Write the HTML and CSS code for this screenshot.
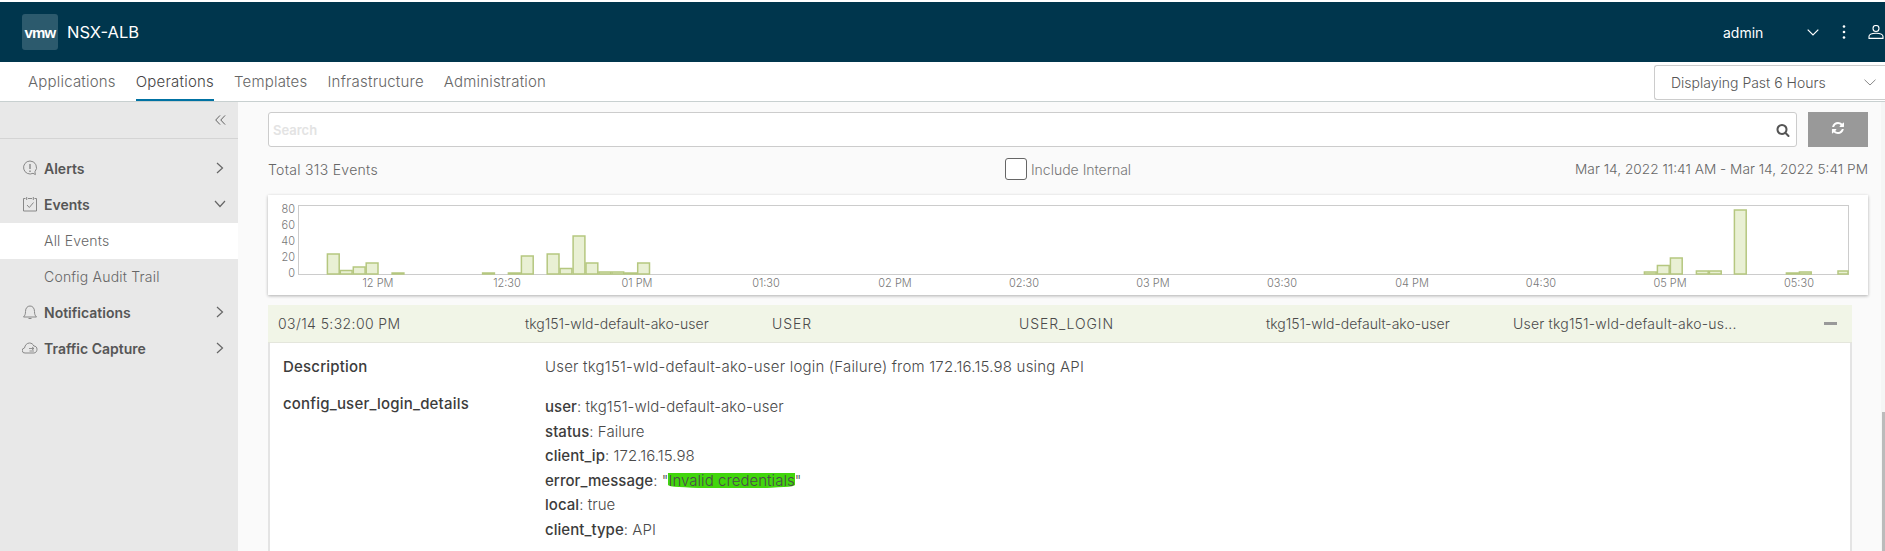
FILE: index.html
```html
<!DOCTYPE html>
<html lang="en">
<head>
<meta charset="utf-8">
<title>NSX-ALB</title>
<link rel="stylesheet" href="styles.css">
</head>
<body>
<header class="topbar">
  <div class="brand">
    <span class="logo">vmw</span>
    <span class="product">NSX-ALB</span>
  </div>
  <div class="account">
    <span class="username">admin</span>
    <svg class="account-chevron" viewBox="0 0 12 7"><path d="M.7.7 6 6 11.300.7" fill="none" stroke="#fff" stroke-width="1.200"/></svg>
    <svg class="account-dots" viewBox="0 0 4 14"><circle cx="2" cy="1.500" r="1.300"/><circle cx="2" cy="7" r="1.300"/><circle cx="2" cy="12.500" r="1.300"/></svg>
    <svg class="account-user" viewBox="0 0 16 14"><circle cx="8" cy="3.500" r="3" fill="none" stroke="#fff" stroke-width="1.100"/><path d="M1 13.400v-1.900c0-2 3-3.300 7-3.300s7 1.300 7 3.300v1.900z" fill="none" stroke="#fff" stroke-width="1.100"/></svg>
  </div>
</header>

<nav class="tabs">
  <a class="tab">Applications</a>
  <a class="tab tab-active">Operations</a>
  <a class="tab">Templates</a>
  <a class="tab">Infrastructure</a>
  <a class="tab">Administration</a>
  <div class="range">
    <span>Displaying Past 6 Hours</span>
    <svg class="range-chevron" viewBox="0 0 12 7"><path d="M.5.7 6 6 11.500.7" fill="none" stroke="#8a8a8a" stroke-width="1"/></svg>
  </div>
</nav>

<div class="main">
  <aside class="sidebar">
    <div class="collapse">
      <svg class="collapse-icon" viewBox="0 0 12 12"><path d="M5.500 1 .8 6l4.700 5M11 1 6.300 6l4.700 5" fill="none" stroke="#555" stroke-width="1"/></svg>
    </div>
    <ul class="menu">
      <li class="menu-item">
        <svg class="menu-icon" viewBox="0 0 16 16"><path d="M8 1a6.500 6.500 0 1 0 3 12.300l2.400 1.300-.5-2.800A6.500 6.500 0 0 0 8 1z" fill="none" stroke="#888" stroke-width="1"/><path d="M8 4v5M8 10.500v1.500" stroke="#888" stroke-width="1.400"/></svg>
        <span class="menu-label">Alerts</span>
        <svg class="menu-chevron" viewBox="0 0 8 12"><path d="M1 1l5.500 5L1 11" fill="none" stroke="#666" stroke-width="1.200"/></svg>
      </li>
      <li class="menu-item">
        <svg class="menu-icon" viewBox="0 0 16 16"><path d="M3.500 2.500H1.500v12.500h13V2.500h-2M6 2.500h4" fill="none" stroke="#888" stroke-width="1"/><path d="M4.700 1v3M11.300 1v3" stroke="#888" stroke-width="1"/><path d="M5 9l2.300 2.500L11.500 6.500" fill="none" stroke="#888" stroke-width="1"/></svg>
        <span class="menu-label">Events</span>
        <svg class="menu-chevron-down" viewBox="0 0 12 8"><path d="M1 1l5 5.500L11 1" fill="none" stroke="#666" stroke-width="1.200"/></svg>
      </li>
      <li class="submenu-item submenu-active">All Events</li>
      <li class="submenu-item">Config Audit Trail</li>
      <li class="menu-item">
        <svg class="menu-icon" viewBox="0 0 16 16"><path d="M1.500 13c1.500-1.500 2-3 2-5.500C3.500 4 5.500 2 8 2s4.500 2 4.500 5.500c0 2.500.5 4 2 5.500zM6.500 14.500h3" fill="none" stroke="#888" stroke-width="1"/></svg>
        <span class="menu-label">Notifications</span>
        <svg class="menu-chevron" viewBox="0 0 8 12"><path d="M1 1l5.500 5L1 11" fill="none" stroke="#666" stroke-width="1.200"/></svg>
      </li>
      <li class="menu-item">
        <svg class="menu-icon" viewBox="0 0 16 16"><path d="M4 13H3a2.500 2.500 0 0 1-.5-5C3 5 5 3 7.500 3c2 0 3.700 1.300 4.300 3 1.900 0 3.200 1.300 3.200 3.300 0 2-1.300 3.700-3 3.700z" fill="none" stroke="#888" stroke-width="1"/><path d="M7 8.500h5M10 7l2 1.500-2 1.500M12 11H7.500" fill="none" stroke="#888" stroke-width=".9"/></svg>
        <span class="menu-label">Traffic Capture</span>
        <svg class="menu-chevron" viewBox="0 0 8 12"><path d="M1 1l5.500 5L1 11" fill="none" stroke="#666" stroke-width="1.200"/></svg>
      </li>
    </ul>
  </aside>

  <section class="content">
    <div class="search-row">
      <div class="search">
        <span class="search-placeholder">Search</span>
        <svg class="search-icon" viewBox="0 0 1792 1792"><path d="M1216 832q0-185-131.500-316.500t-316.500-131.500-316.500 131.500-131.500 316.500 131.500 316.500 316.500 131.500 316.500-131.500 131.500-316.500zm512 832q0 52-38 90t-90 38q-54 0-90-38l-343-342q-179 124-399 124-143 0-273.500-55.500t-225-150-150-225-55.500-273.500 55.500-273.500 150-225 225-150 273.500-55.500 273.500 55.500 225 150 150 225 55.500 273.500q0 220-124 399l343 343q37 37 37 90z"/></svg>
      </div>
      <button class="refresh" type="button" aria-label="Refresh">
        <svg class="refresh-icon" viewBox="0 0 1792 1792"><path d="M1639 1056q0 5-1 7-64 268-268 434.500t-478 166.500q-146 0-282.500-55t-252.500-157l-129 129q-19 19-45 19t-45-19-19-45v-448q0-26 19-45t45-19h448q26 0 45 19t19 45-19 45l-137 137q71 66 161 102t187 36q134 0 250-65t186-179q11-17 53-117 8-23 30-23h192q13 0 22.500 9.500t9.500 22.500zm25-800v448q0 26-19 45t-45 19h-448q-26 0-45-19t-19-45 19-45l138-138q-148-137-349-137-134 0-250 65t-186 179q-11 17-53 117-8 23-30 23h-199q-13 0-22.500-9.500t-9.500-22.500v-7q65-268 270-434.500t480-166.500q146 0 284 55.500t245 156.500l130-129q19-19 45-19t45 19 19 45z"/></svg>
      </button>
    </div>

    <div class="stats">
      <span class="total">Total 313 Events</span>
      <label class="include"><span class="checkbox"></span><span>Include Internal</span></label>
      <span class="dates">Mar 14, 2022 11:41 AM - Mar 14, 2022 5:41 PM</span>
    </div>

    <div class="chart-card">
      <svg class="chart" viewBox="268 195 1600 100">
        <rect class="plot" x="298.500" y="205.500" width="1550" height="69"/>
        <g class="y-labels">
          <text x="295" y="213">80</text><text x="295" y="229">60</text><text x="295" y="245">40</text><text x="295" y="261">20</text><text x="295" y="277">0</text>
        </g>
        <g class="x-labels">
          <text x="378" y="287">12 PM</text><text x="507" y="287">12:30</text><text x="637" y="287">01 PM</text><text x="766" y="287">01:30</text><text x="895" y="287">02 PM</text><text x="1024" y="287">02:30</text><text x="1153" y="287">03 PM</text><text x="1282" y="287">03:30</text><text x="1412" y="287">04 PM</text><text x="1541" y="287">04:30</text><text x="1670" y="287">05 PM</text><text x="1799" y="287">05:30</text>
        </g>
        <g class="bars">
          <rect x="327.400" y="254" width="11.800" height="20"/>
          <rect x="340.300" y="270.500" width="11.800" height="3.500"/>
          <rect x="353.300" y="267" width="11.800" height="7"/>
          <rect x="366.200" y="263" width="11.800" height="11"/>
          <rect x="392.100" y="273" width="11.800" height="1"/>
          <rect x="482.600" y="273" width="11.800" height="1"/>
          <rect x="508.400" y="273" width="11.800" height="1"/>
          <rect x="521.400" y="256" width="11.800" height="18"/>
          <rect x="547.200" y="254" width="11.800" height="20"/>
          <rect x="560.100" y="268.500" width="11.800" height="5.500"/>
          <rect x="573.100" y="236" width="11.800" height="38"/>
          <rect x="586" y="263" width="11.800" height="11"/>
          <rect x="598.900" y="272" width="11.800" height="2"/>
          <rect x="611.900" y="272" width="11.800" height="2"/>
          <rect x="624.800" y="273" width="11.800" height="1"/>
          <rect x="637.700" y="263" width="11.800" height="11"/>
          <rect x="1644.400" y="272" width="11.800" height="2"/>
          <rect x="1657.400" y="265.500" width="11.800" height="8.500"/>
          <rect x="1670.400" y="258" width="11.800" height="16"/>
          <rect x="1696.400" y="271" width="11.800" height="3"/>
          <rect x="1709.400" y="271" width="11.800" height="3"/>
          <rect x="1734.400" y="210" width="11.800" height="64"/>
          <rect x="1786.400" y="273" width="11.800" height="1"/>
          <rect x="1799.400" y="272" width="11.800" height="2"/>
          <rect x="1838" y="271" width="10" height="3"/>
        </g>
      </svg>
    </div>

    <article class="event">
      <div class="event-row">
        <span class="event-time">03/14 5:32:00 PM</span>
        <span>tkg151-wld-default-ako-user</span>
        <span class="event-caps">USER</span>
        <span class="event-caps">USER_LOGIN</span>
        <span>tkg151-wld-default-ako-user</span>
        <span class="event-summary">User tkg151-wld-default-ako-us...</span>
        <span class="event-toggle"></span>
      </div>
      <div class="event-detail">
        <div class="detail-key">Description</div>
        <div class="detail-value">User tkg151-wld-default-ako-user login (Failure) from 172.16.15.98 using API</div>
        <div class="detail-key">config_user_login_details</div>
        <div class="detail-list">
          <div><b>user</b>: tkg151-wld-default-ako-user</div>
          <div><b>status</b>: Failure</div>
          <div><b>client_ip</b>: 172.16.15.98</div>
          <div><b>error_message</b>: "<span class="marker">Invalid credentials</span>"</div>
          <div><b>local</b>: true</div>
          <div><b>client_type</b>: API</div>
        </div>
      </div>
    </article>

    <div class="scroll-track"><div class="scroll-thumb"></div></div>
  </section>
</div>
</body>
</html>
```
FILE: styles.css
```css
* { box-sizing: border-box; }
html, body { margin: 0; height: 551px; overflow: hidden; }
body {
  display: flex;
  flex-direction: column;
  font-family: Inter, "Liberation Sans", sans-serif;
  font-size: 14px;
  font-weight: 300;
  color: #565656;
  background: #fff;
  padding-top: 2px;
}

.topbar {
  flex: 0 0 60px;
  display: flex;
  align-items: center;
  justify-content: space-between;
  background: #00364d;
  color: #fff;
  overflow: hidden;
}
.brand { display: flex; align-items: center; padding-left: 22px; }
.logo {
  width: 36px;
  height: 36px;
  display: flex;
  align-items: center;
  justify-content: center;
  background: #2c5a6d;
  border-radius: 3px;
  font-family: "Liberation Sans", sans-serif;
  font-size: 15px;
  font-weight: 700;
  letter-spacing: -0.8px;
}
.product { margin-left: 9px; font-size: 16.5px; font-weight: 400; }
.account { display: flex; align-items: center; width: 162px; flex: 0 0 162px; }
.username { width: 84px; font-size: 14px; font-weight: 400; }
.account-chevron { width: 12px; height: 7px; }
.account-dots { width: 4px; height: 14px; margin-left: 23px; fill: #fff; }
.account-user { width: 16px; height: 14px; margin-left: 22px; flex: 0 0 16px; }

.tabs {
  flex: 0 0 40px;
  display: flex;
  gap: 20px;
  padding-left: 28px;
  border-bottom: 1px solid #c8d0d0;
  overflow: hidden;
}
.tab { height: 40px; line-height: 39px; color: #666; font-size: 15px; letter-spacing: 0.2px; }
.tab-active { color: #454545; border-bottom: 3px solid #0072a3; }
.range {
  margin-left: auto;
  margin-top: 3px;
  flex: 0 0 231px;
  width: 231px;
  height: 35px;
  display: flex;
  align-items: center;
  justify-content: space-between;
  padding: 0 9px 0 16px;
  border: 1px solid #ccc;
  border-right: 0;
  border-radius: 3px 0 0 3px;
  color: #565656;
  font-size: 14px;
}
.range-chevron { width: 12px; height: 7px; }

.main { flex: 1; display: flex; min-height: 0; }

.sidebar { flex: 0 0 238px; background: #e8e8e8; }
.collapse {
  height: 37px;
  display: flex;
  align-items: center;
  justify-content: flex-end;
  padding-right: 12px;
  border-bottom: 1px solid #d4d4d4;
}
.collapse-icon { width: 11px; height: 12px; }
.menu { list-style: none; margin: 0; padding: 12px 0 0; }
.menu-item {
  height: 36px;
  display: flex;
  align-items: center;
  padding: 0 14px 2px 22px;
  color: #565656;
  font-weight: 600;
}
.menu-icon { width: 16px; height: 16px; flex: 0 0 16px; }
.menu-label { margin-left: 6px; flex: 1; }
.menu-chevron { width: 8px; height: 12px; }
.menu-chevron-down { width: 12px; height: 8px; margin-right: -2px; }
.submenu-item { height: 36px; line-height: 36px; padding-left: 44px; color: #666; letter-spacing: 0.2px; }
.submenu-active { background: #fff; }

.content {
  position: relative;
  flex: 1;
  display: flex;
  flex-direction: column;
  min-width: 0;
  padding: 10px 17px 0 30px;
  background: #fafafa;
}
.search-row { flex: 0 0 35px; display: flex; gap: 11px; }
.search {
  flex: 1;
  display: flex;
  align-items: center;
  justify-content: space-between;
  padding: 0 6px 0 4px;
  background: #fff;
  border: 1px solid #ccc;
  border-radius: 3px;
}
.search-placeholder { font-size: 13px; font-weight: 600; color: #e3e3e3; }
.search-icon { width: 14px; height: 14px; fill: #555; }
.refresh {
  flex: 0 0 60px;
  display: flex;
  align-items: center;
  justify-content: center;
  padding: 0 0 3px;
  border: 0;
  background: #999;
}
.refresh-icon { width: 14px; height: 14px; fill: #fff; }

.stats {
  flex: 0 0 48px;
  display: grid;
  grid-template-columns: 1fr auto 1fr;
  align-items: center;
  padding-bottom: 4px;
}
.total { color: #666; letter-spacing: 0.3px; }
.include { display: flex; align-items: center; gap: 4px; color: #777; }
.checkbox {
  width: 22px;
  height: 22px;
  background: #fff;
  border: 1px solid #666;
  border-radius: 3px;
}
.dates { text-align: right; color: #666; font-size: 13.7px; }

.chart-card {
  flex: 0 0 100px;
  background: #fff;
  box-shadow: 0 1px 3px rgba(0, 0, 0, 0.3);
}
.chart { display: block; width: 1600px; height: 100px; }
.plot { fill: none; stroke: #ccc; stroke-width: 1; }
.y-labels text, .x-labels text { font-size: 11px; fill: #777; font-weight: 300; }
.y-labels text { text-anchor: end; }
.x-labels text { text-anchor: middle; }
.bars rect { fill: #e9f0d4; stroke: #b5c77f; stroke-width: 1.500; }

.event {
  flex: 1;
  display: flex;
  flex-direction: column;
  margin: 10px 16px 0 0;
  min-height: 0;
}
.event-row {
  flex: 0 0 38px;
  display: grid;
  grid-template-columns: 247px 247px 247px 247px 247px 229px 1fr;
  align-items: center;
  padding-left: 10px;
  background: #f1f5e7;
  border-bottom: 1px solid #e4e6dc;
  color: #4a4a4a;
}
.event-time { letter-spacing: 0.4px; }
.event-caps { letter-spacing: 0.9px; }
.event-summary { white-space: nowrap; letter-spacing: 0.2px; }
.event-toggle {
  justify-self: end;
  width: 13px;
  height: 3px;
  margin-right: 15px;
  background: #999;
}
.event-detail {
  flex: 1;
  display: grid;
  grid-template-columns: 262px 1fr;
  grid-auto-rows: min-content;
  row-gap: 17px;
  padding: 14px 0 0 13px;
  background: #fff;
  border-left: 2px solid #e4e4e4;
  border-right: 2px solid #e4e4e4;
  font-size: 15px;
  letter-spacing: 0.2px;
  line-height: 20px;
  color: #4a4a4a;
}
.detail-key { font-weight: 500; color: #3c3c3c; }
.detail-list { line-height: 24.5px; margin-top: 1px; letter-spacing: 0.05px; }
.detail-list b { font-weight: 500; color: #3c3c3c; }
.marker {
  display: inline-block;
  line-height: 15px;
  background: #41d60c;
  border-radius: 0 0 30% 30% / 0 0 20% 20%;
}

.scroll-track {
  position: absolute;
  top: 0;
  right: 0;
  bottom: 0;
  width: 4px;
  background: #f5f5f5;
}
.scroll-thumb {
  position: absolute;
  top: 310px;
  right: 0;
  bottom: 0;
  width: 3px;
  background: #bbb;
}
```
